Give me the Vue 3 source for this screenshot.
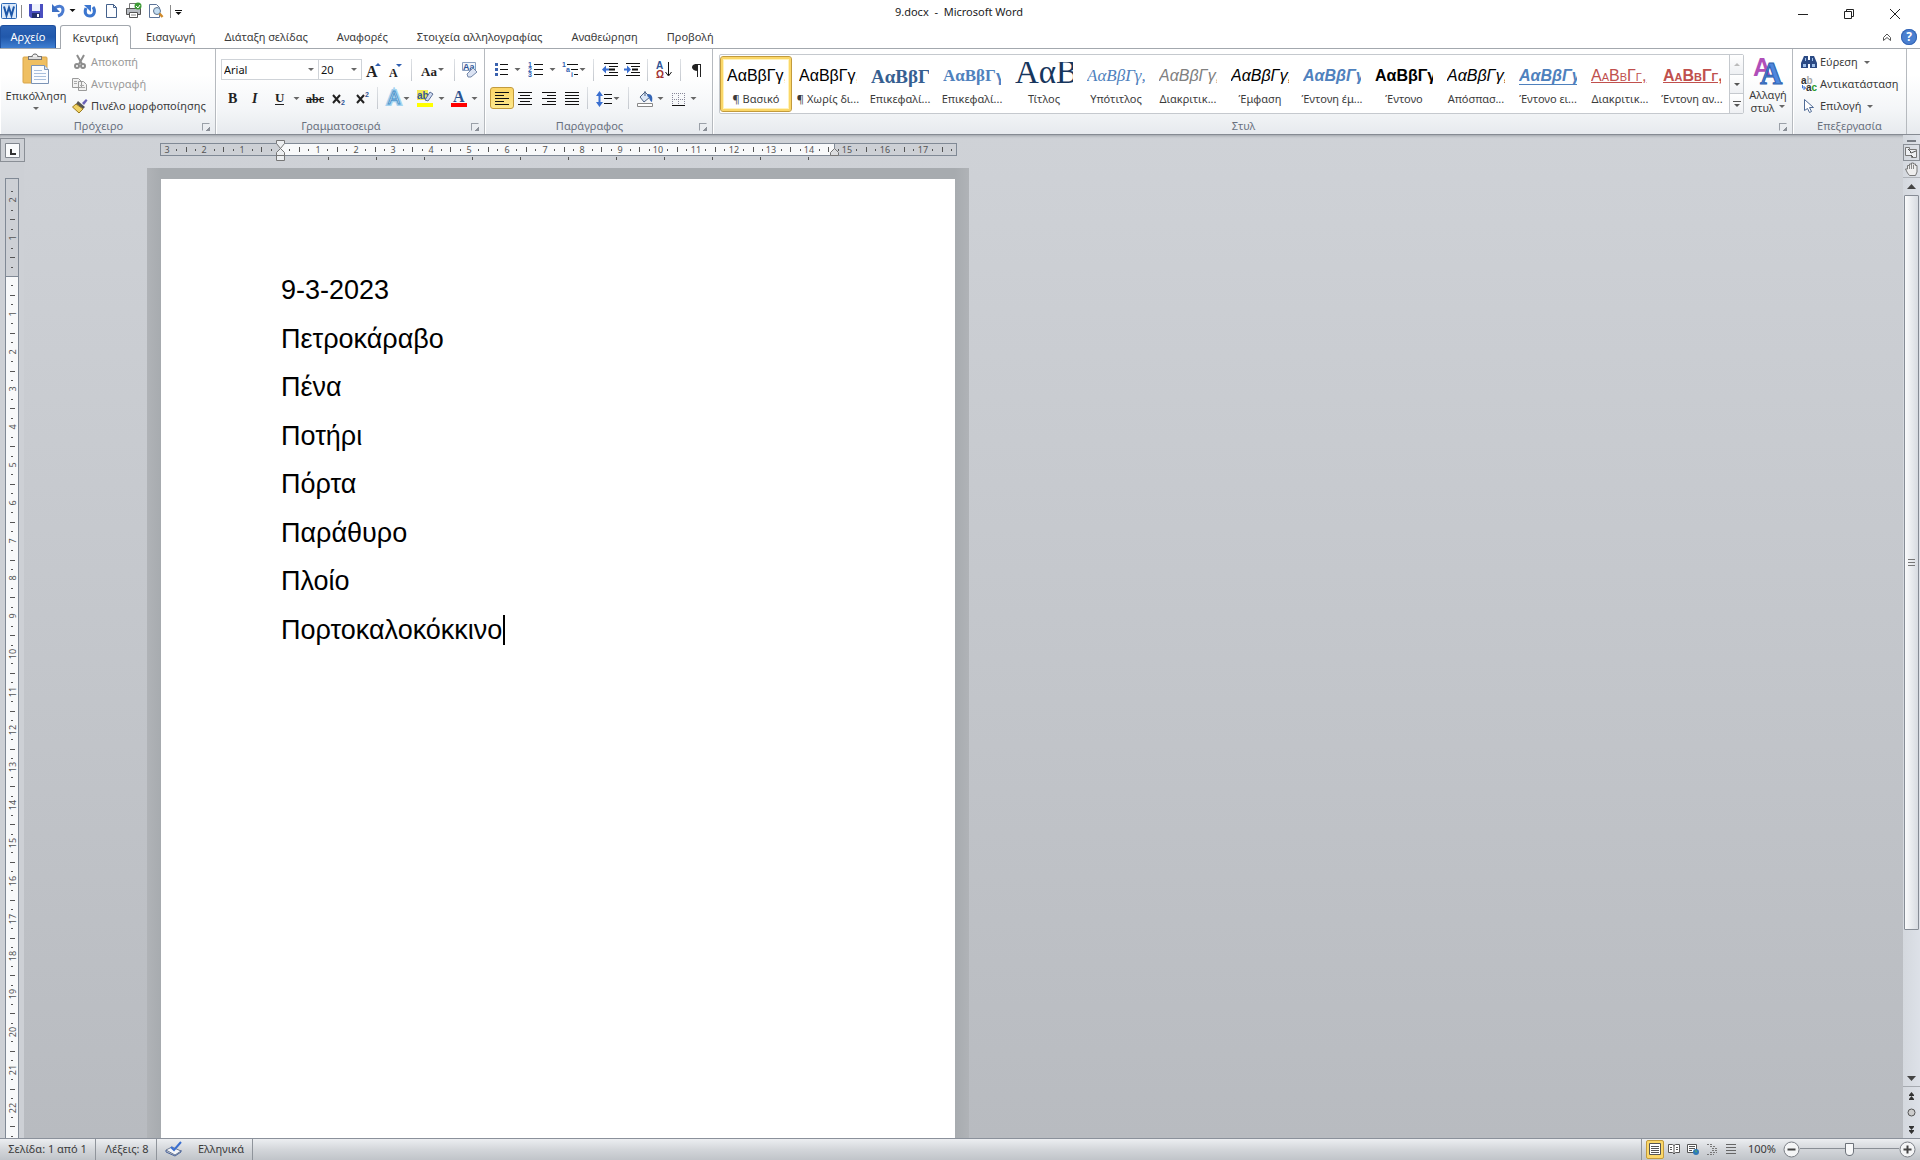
<script setup>
import { h } from 'vue'

// Icon canvas: shows the window-coordinate region x, y, w, h of the toolbar artwork
const Ico = (p, { slots }) =>
  h('svg', { viewBox: `${p.x} ${p.y} ${p.w} ${p.h}`, width: p.w, height: p.h, 'aria-hidden': 'true' }, slots.default())
Ico.props = ['x', 'y', 'w', 'h']

// Small drop-down triangle centred on x, y
const Tri = (p) => h('path', { d: `M${p.x - 3} ${p.y - 1}h6l-3 3z`, fill: p.c || '#666' })
Tri.props = ['x', 'y', 'c']

const tabs = ['Εισαγωγή', 'Διάταξη σελίδας', 'Αναφορές', 'Στοιχεία αλληλογραφίας', 'Αναθεώρηση', 'Προβολή']

const styles = [
  { name: '¶ Βασικό', cls: 'normal' },
  { name: '¶ Χωρίς δι...', cls: 'normal' },
  { name: 'Επικεφαλί...', cls: 'heading1' },
  { name: 'Επικεφαλί...', cls: 'heading2' },
  { name: 'Τίτλος', cls: 'title' },
  { name: 'Υπότιτλος', cls: 'subtitle' },
  { name: 'Διακριτικ...', cls: 'subtle' },
  { name: 'Έμφαση', cls: 'emphasis' },
  { name: 'Έντονη έμ...', cls: 'intense' },
  { name: 'Έντονο', cls: 'strong' },
  { name: 'Απόσπασ...', cls: 'emphasis' },
  { name: 'Έντονο ει...', cls: 'intense-quote' },
  { name: 'Διακριτικ...', cls: 'subtle-ref' },
  { name: 'Έντονη αν...', cls: 'intense-ref' },
]

const lines = ['9-3-2023', 'Πετροκάραβο', 'Πένα', 'Ποτήρι', 'Πόρτα', 'Παράθυρο', 'Πλοίο', 'Πορτοκαλοκόκκινο']

// Ruler marks in quarter centimetres; 37.8px to the centimetre
const marks = (from, to, origin) => {
  const out = []
  for (let q = from; q <= to; q++) {
    if (q === 0) continue
    out.push({ q, at: Math.round(origin + (q * 37.8) / 4), kind: q % 4 === 0 ? 'num' : q % 2 === 0 ? 'half' : 'dot', n: Math.abs(q / 4) })
  }
  return out
}
const hMarks = marks(-12, 71, 120)
const vMarks = marks(-9, 140, 98)
const tabStops = Array.from({ length: 11 }, (_, i) => 168 + i * 48)
</script>

<template>
  <div class="app">
    <header class="titlebar">
      <div class="qat">
        <Ico :x="0" :y="0" :w="24" :h="24">
          <rect x="1.500" y="3.500" width="15" height="15" rx="1" fill="#dbe9fa" stroke="#2d68b5" />
          <path d="M4 6.500l2.500 9 2.500-8 2.500 8 2.500-9" fill="none" stroke="#1d57a8" stroke-width="2" />
          <path d="M21.500 5v13" stroke="#8a8a8a" />
        </Ico>
        <button aria-label="Αποθήκευση"><Ico :x="24" :y="0" :w="24" :h="24">
          <path d="M29 4h14v14H31l-2-2z" fill="#4a4fc0" /><path d="M32 4h8v7h-8z" fill="#eef2fb" /><path d="M32 13h8v5h-8z" fill="#23306f" /><path d="M37 14h2v3h-2z" fill="#fff" />
        </Ico></button>
        <button aria-label="Αναίρεση"><Ico :x="48" :y="0" :w="30" :h="24">
          <path d="M55 8c4-3 8-2 8 2 0 3-2 5-5 6" fill="none" stroke="#4a7bd0" stroke-width="3" /><path d="M52 4v8h8z" fill="#3c6fc4" /><Tri :x="72.500" :y="10" c="#111" />
        </Ico></button>
        <button aria-label="Επανάληψη"><Ico :x="78" :y="0" :w="24" :h="24">
          <path d="M86 8c-2 5 0 8 4 8s6-5 3-9" fill="none" stroke="#3c76cf" stroke-width="3" /><path d="M84 5h7v7z" fill="#3c76cf" />
        </Ico></button>
        <button aria-label="Νέο"><Ico :x="102" :y="0" :w="20" :h="24">
          <path d="M106.500 4.500h7l3 3v10h-10z" fill="#fcfdff" stroke="#44618c" /><path d="M113.500 4.500v3h3" fill="none" stroke="#44618c" />
        </Ico></button>
        <button aria-label="Εκτύπωση"><Ico :x="122" :y="0" :w="23" :h="24">
          <path d="M129.500 3.500h8v6h-8z" fill="#fff" stroke="#777" /><path d="M126.500 8.500h14v6h-14z" fill="#b8bcc2" stroke="#555" /><path d="M129.500 12.500h8v5h-8z" fill="#fff" stroke="#555" /><path d="M131 15h5" stroke="#888" /><circle cx="138" cy="6" r="3.500" fill="#3d9b35" /><path d="M136 6l2 2 2-3" fill="none" stroke="#fff" />
        </Ico></button>
        <button aria-label="Προεπισκόπηση"><Ico :x="145" :y="0" :w="28" :h="24">
          <path d="M149.500 4.500h7l3 3v10h-10z" fill="#fff" stroke="#5b7398" /><circle cx="157" cy="11" r="3.500" fill="#c3ddf2" stroke="#5d738f" /><path d="M159.500 13.500l3 3.500" stroke="#d08a2a" stroke-width="2.500" /><path d="M170.500 5v13" stroke="#8a8a8a" />
        </Ico></button>
        <button aria-label="Προσαρμογή"><Ico :x="173" :y="0" :w="14" :h="24">
          <path d="M175 10.500h7" stroke="#111" /><Tri :x="178.500" :y="13" c="#111" />
        </Ico></button>
      </div>
      <h1 class="doc-title">9.docx&nbsp; -&nbsp; Microsoft Word</h1>
      <div class="win">
        <button aria-label="Ελαχιστοποίηση"><svg width="12" height="12"><path d="M1 6.500h10" stroke="#222" /></svg></button>
        <button aria-label="Επαναφορά"><svg width="12" height="12"><path d="M1.500 3.500h7v7h-7zM3.500 3.500v-2h7v7h-2" fill="none" stroke="#222" /></svg></button>
        <button aria-label="Κλείσιμο"><svg width="12" height="12"><path d="M1 1l10 10M11 1L1 11" stroke="#222" /></svg></button>
      </div>
    </header>

    <nav class="tabs">
      <button class="file-tab">Αρχείο</button>
      <button class="tab active">Κεντρική</button>
      <button v-for="t in tabs" :key="t" class="tab">{{ t }}</button>
      <div class="tab-tools">
        <button aria-label="Σύμπτυξη"><svg width="12" height="12"><path d="M2.500 6.500L6 3l3.500 3.500v3L6 6.500l-3.500 3z" fill="none" stroke="#555" /></svg></button>
        <button class="help" aria-label="Βοήθεια">?</button>
      </div>
    </nav>

    <section class="ribbon">
      <div class="group clipboard">
        <div class="body">
          <button class="big paste">
            <svg width="28" height="32">
              <rect x="1" y="4" width="24" height="26" rx="1" fill="#efbf62" stroke="#d9a548" />
              <path d="M6 3h14v4H6z" fill="#777" /><path d="M7 4h12v2H7z" fill="#ddd" /><path d="M10 4c0-4 6-4 6 0" fill="#eee" stroke="#666" />
              <path d="M9.500 12.500h13l4 4v14h-17z" fill="#fafcff" stroke="#7b93b5" /><path d="M22.500 12.500v4h4" fill="#dbe6f4" stroke="#7b93b5" />
              <path d="M12 17.500h8M12 20.500h12M12 23.500h12M12 26.500h12" stroke="#a9bfdc" />
            </svg>
            <span>Επικόλληση</span>
            <svg width="8" height="5"><path d="M1 1h6l-3 3z" fill="#666" /></svg>
          </button>
          <div class="stack">
            <button class="cmd" disabled><svg width="16" height="16"><path d="M5 1l5 9M12 1L7 10" stroke="#8d8d8d" stroke-width="2" /><circle cx="5" cy="12" r="2" fill="none" stroke="#8d8d8d" stroke-width="2" /><circle cx="11" cy="12" r="2" fill="none" stroke="#8d8d8d" stroke-width="2" /></svg>Αποκοπή</button>
            <button class="cmd" disabled><svg width="16" height="16"><path d="M.5 2.500h6l3 3v6h-9zM6.500 5.500h5l3 3v6h-8z" fill="#f2f2f2" stroke="#9a9a9a" /><path d="M2 5.500h3M2 7.500h3M8 9.500h4M8 11.500h5" stroke="#aaa" /></svg>Αντιγραφή</button>
            <button class="cmd"><svg width="16" height="16"><path d="M10 5l4-4 1.500 1.500L12 7z" fill="#6a62b8" /><path d="M6 3l7 6-2 2-7-5z" fill="#555" /><path d="M4 6l7 5-4 4-6.500-6z" fill="#f0d264" stroke="#9a7a20" /></svg>Πινέλο μορφοποίησης</button>
          </div>
        </div>
        <div class="label">Πρόχειρο<i class="launch" /></div>
      </div>

      <div class="group font">
        <div class="body rows">
          <div class="row">
            <label class="combo name"><select aria-label="Γραμματοσειρά"><option>Arial</option></select></label>
            <label class="combo size"><select aria-label="Μέγεθος"><option>20</option></select></label>
            <button aria-label="Μεγέθυνση"><Ico :x="362" :y="59" :w="24" :h="22"><text x="366" y="77" class="g" font-size="16">A</text><path d="M375 66h6l-3-3z" fill="#2f5eb0" /></Ico></button>
            <button aria-label="Σμίκρυνση"><Ico :x="386" :y="59" :w="21" :h="22"><text x="389" y="77" class="g" font-size="12">A</text><path d="M396 64h6l-3 3z" fill="#2f5eb0" /></Ico></button>
            <i class="sep" />
            <button aria-label="Πεζά-κεφαλαία"><Ico :x="416" :y="59" :w="34" :h="22"><text x="421" y="76" class="g" font-size="13">Aa</text><Tri :x="441" :y="69" /></Ico></button>
            <i class="sep" />
            <button aria-label="Απαλοιφή"><Ico :x="459" :y="59" :w="23" :h="22"><path d="M462.500 62.500h13v8h-13z" fill="#f4f7fc" stroke="#8ba0c0" /><text x="463" y="70" class="s" font-size="9" font-weight="bold">Aa</text><path d="M467 74l6-6 4 4-6 5h-3z" fill="#dbe3f3" stroke="#7387a8" /></Ico></button>
          </div>
          <div class="row">
            <button aria-label="Έντονα"><Ico :x="221" :y="87" :w="23" :h="22"><text x="228" y="103" class="g" font-size="14">B</text></Ico></button>
            <button aria-label="Πλάγια"><Ico :x="244" :y="87" :w="23" :h="22"><text x="252" y="103" class="g" font-size="14" font-style="italic">I</text></Ico></button>
            <button aria-label="Υπογράμμιση"><Ico :x="267" :y="87" :w="36" :h="22"><text x="275" y="102" class="g" font-size="13">U</text><path d="M275 104.500h9" stroke="#222" /><Tri :x="296.500" :y="98" /></Ico></button>
            <button aria-label="Διαγραφή"><Ico :x="303" :y="87" :w="24" :h="22"><text x="306" y="103" class="g" font-size="12">abc</text><path d="M306 99.500h18" stroke="#222" /></Ico></button>
            <button aria-label="Δείκτης"><Ico :x="327" :y="87" :w="23" :h="22"><path d="M333 95l7 8M340 95l-7 8" stroke="#222" stroke-width="2" /><text x="341" y="105" class="s" font-size="7" font-weight="bold">2</text></Ico></button>
            <button aria-label="Εκθέτης"><Ico :x="350" :y="87" :w="23" :h="22"><path d="M357 95l7 8M364 95l-7 8" stroke="#222" stroke-width="2" /><text x="365" y="97" class="s" font-size="7" font-weight="bold">2</text></Ico></button>
            <i class="sep" />
            <button aria-label="Εφέ κειμένου"><Ico :x="382" :y="87" :w="31" :h="22"><text x="388" y="104" font-size="18" fill="#fff" stroke="#a5d3f0" stroke-width="4" paint-order="stroke">A</text><text x="388" y="104" font-size="18" fill="#fff" stroke="#4a94cc">A</text><Tri :x="406.500" :y="98" /></Ico></button>
            <button aria-label="Επισήμανση"><Ico :x="413" :y="87" :w="34" :h="22"><path d="M417 90h11v10h-11z" fill="#f3ea55" /><text x="417" y="99" class="s" font-size="10" font-weight="bold">ab</text><path d="M425 100l5-8 3 2-5 7z" fill="#cfdaf0" stroke="#5c6f96" /><path d="M417 103h16v4h-16z" fill="#ff0" /><Tri :x="441.500" :y="98" /></Ico></button>
            <button aria-label="Χρώμα"><Ico :x="447" :y="87" :w="35" :h="22"><text x="453" y="102" class="g blue" font-size="16">A</text><path d="M451 103h16v4h-16z" fill="#f00" /><Tri :x="474.500" :y="98" /></Ico></button>
          </div>
        </div>
        <div class="label">Γραμματοσειρά<i class="launch" /></div>
      </div>

      <div class="group para">
        <div class="body rows">
          <div class="row">
            <button aria-label="Κουκκίδες"><Ico :x="490" :y="59" :w="34" :h="22"><path d="M500 64.500h8M500 69.500h8M500 74.500h8" stroke="#111" /><path d="M495 63h3v3h-3zM495 68h3v3h-3zM495 73h3v3h-3z" fill="#3a62ae" /><Tri :x="517.500" :y="69" /></Ico></button>
            <button aria-label="Αρίθμηση"><Ico :x="524" :y="59" :w="35" :h="22"><path d="M534 64.500h9M534 69.500h9M534 74.500h9" stroke="#111" /><text x="528" y="67" class="n">1</text><text x="528" y="72" class="n">2</text><text x="528" y="77" class="n">3</text><Tri :x="552.500" :y="69" /></Ico></button>
            <button aria-label="Λίστα πολλών επιπέδων"><Ico :x="559" :y="59" :w="30" :h="22"><path d="M567 64.500h11M571 69.500h7M574 74.500h4" stroke="#111" /><text x="562" y="67" class="n">1</text><text x="566" y="72" class="n">a</text><text x="571" y="77" class="n">i</text><Tri :x="582.500" :y="69" /></Ico></button>
            <i class="sep" />
            <button aria-label="Μείωση εσοχής"><Ico :x="598" :y="59" :w="23" :h="22"><path d="M604 63.500h14M609 66.500h9M609 72.500h9M604 75.500h14" stroke="#111" /><path d="M609 69.500h6" stroke="#111" stroke-width="2" /><path d="M602 69.500l4-4v3h3v2h-3v3z" fill="#3a6fd0" /></Ico></button>
            <button aria-label="Αύξηση εσοχής"><Ico :x="621" :y="59" :w="22" :h="22"><path d="M626 63.500h14M631 66.500h9M631 72.500h9M626 75.500h14" stroke="#111" /><path d="M632 69.500h6" stroke="#111" stroke-width="2" /><path d="M631 69.500l-4-4v3h-3v2h3v3z" fill="#3a6fd0" /></Ico></button>
            <i class="sep" />
            <button aria-label="Ταξινόμηση"><Ico :x="652" :y="59" :w="24" :h="22"><text x="656" y="69" class="s" font-size="10" font-weight="bold">A</text><text x="656" y="78" class="s red" font-size="10" font-weight="bold">Ω</text><path d="M668.500 62v13M665.500 72l3 4 3-4" fill="none" stroke="#111" /></Ico></button>
            <i class="sep" />
            <button aria-label="Σημάδια"><Ico :x="685" :y="59" :w="23" :h="22"><path d="M701 64.500h-6M697.500 64v13M700.500 64v13" stroke="#222" /><path d="M698 64c-8-1-8 7 0 7z" fill="#222" /></Ico></button>
          </div>
          <div class="row">
            <button class="on" aria-label="Στοίχιση αριστερά"><Ico :x="490" :y="87" :w="22" :h="20"><path d="M494 91.500h14M494 94.500h9M494 97.500h14M494 100.500h9M494 103.500h14" stroke="#111" /></Ico></button>
            <button aria-label="Στο κέντρο"><Ico :x="514" :y="87" :w="23" :h="22"><path d="M518 92.500h14M520 95.500h10M518 98.500h14M520 101.500h10M518 104.500h14" stroke="#111" /></Ico></button>
            <button aria-label="Στοίχιση δεξιά"><Ico :x="537" :y="87" :w="23" :h="22"><path d="M542 92.500h14M547 95.500h9M542 98.500h14M547 101.500h9M542 104.500h14" stroke="#111" /></Ico></button>
            <button aria-label="Πλήρης"><Ico :x="560" :y="87" :w="23" :h="22"><path d="M565 92.500h14M565 95.500h14M565 98.500h14M565 101.500h14M565 104.500h14" stroke="#111" /></Ico></button>
            <i class="sep" />
            <button aria-label="Διάστιχο"><Ico :x="592" :y="87" :w="32" :h="22"><path d="M599.500 94v10" stroke="#3a6fd0" stroke-width="2" /><path d="M596 96l3.500-5 3.500 5zM596 102l3.500 5 3.500-5z" fill="#3a6fd0" /><path d="M604 94.500h8M604 98.500h8M604 103.500h8" stroke="#111" /><Tri :x="616.500" :y="98" /></Ico></button>
            <i class="sep" />
            <button aria-label="Σκίαση"><Ico :x="633" :y="87" :w="34" :h="22"><path d="M640 97l5-5 5 5-6 5z" fill="#dce7f6" stroke="#4c6284" /><path d="M645 96v-5" stroke="#4c6284" /><path d="M648 94c4 0 5 3 4 8-3-1-2-5-5-6z" fill="#3465b5" /><path d="M637.500 103.500h15v3h-15z" fill="#fff" stroke="#888" /><Tri :x="660.500" :y="98" /></Ico></button>
            <button aria-label="Περιγράμματα"><Ico :x="667" :y="87" :w="33" :h="22"><path d="M672.500 93v12M678.500 93v12M684.500 93v12M672 93.500h13M672 99.500h13" stroke="#889" stroke-dasharray="1 1" /><path d="M672 105.500h13" stroke="#111" /><Tri :x="693.500" :y="98" /></Ico></button>
          </div>
        </div>
        <div class="label">Παράγραφος<i class="launch" /></div>
      </div>

      <div class="group style-group">
        <div class="body">
          <div class="gallery">
            <div class="items">
              <button v-for="(s, i) in styles" :key="i" class="style" :class="{ selected: i === 0 }">
                <span class="preview" :class="s.cls">ΑαΒβΓγ,</span>
                <span class="style-name">{{ s.name }}</span>
              </button>
            </div>
            <div class="gallery-nav">
              <button disabled aria-label="Πάνω"><svg width="8" height="5"><path d="M1 4h6l-3-3z" fill="#bbb" /></svg></button>
              <button aria-label="Κάτω"><svg width="8" height="5"><path d="M1 1h6l-3 3z" fill="#555" /></svg></button>
              <button aria-label="Περισσότερα"><svg width="8" height="8"><path d="M0 1.500h8" stroke="#555" /><path d="M1 4h6l-3 3z" fill="#555" /></svg></button>
            </div>
          </div>
          <button class="big change">
            <svg width="32" height="32">
              <text x="1" y="20" font-size="25" font-weight="bold" fill="#b04fb8">A</text>
              <text x="8" y="28" class="big-a" font-size="31" fill="#4f87dd" stroke="#2c5fae">A</text>
            </svg>
            <span>Αλλαγή</span>
            <span>στυλ <svg width="8" height="7"><path d="M1 1h6l-3 3z" fill="#666" /></svg></span>
          </button>
        </div>
        <div class="label">Στυλ<i class="launch" /></div>
      </div>

      <div class="group editing">
        <div class="body">
          <div class="stack">
            <button class="cmd"><svg width="16" height="16"><path d="M3 2h4v4h2V2h4l3 7v5H9v-4H7v4H0V9z" fill="#2b4a84" /><path d="M2 10h3v3H2zM11 10h3v3h-3zM4 4h1v3H4zM11 4h1v3h-1z" fill="#9fc0ea" /></svg>Εύρεση<svg class="dd" width="8" height="5"><path d="M1 1h6l-3 3z" fill="#666" /></svg></button>
            <button class="cmd"><svg width="16" height="16"><text x="0" y="8" font-size="10" font-weight="bold"><tspan fill="#333">a</tspan><tspan fill="#aaa">b</tspan></text><text x="5" y="15" font-size="10" font-weight="bold"><tspan fill="#333">a</tspan><tspan fill="#2a9a2a">c</tspan></text><path d="M1.500 9v3h3M2.500 10l2 2-2 2" fill="none" stroke="#3a6fd0" /></svg>Αντικατάσταση</button>
            <button class="cmd"><svg width="16" height="16"><path d="M3.500 1.500v11l3-2 2 4 2-1-2-4h4z" fill="#fff" stroke="#4f6b96" /></svg>Επιλογή<svg class="dd" width="8" height="5"><path d="M1 1h6l-3 3z" fill="#666" /></svg></button>
          </div>
        </div>
        <div class="label">Επεξεργασία</div>
      </div>
      <div class="tail" />
    </section>

    <main class="workspace">
      <div class="left">
        <button class="corner" aria-label="Στηλοθέτης"><svg width="15" height="15"><path d="M.5.5h14v14H.5z" fill="#fafbfc" stroke="#80858d" /><path d="M5 6h2v4h4v2H5z" fill="#333" /></svg></button>
        <div class="vruler">
          <svg width="14" height="1400">
            <rect x=".5" y=".5" width="13" height="98" fill="#cdd0d5" stroke="#808995" />
            <rect x=".5" y="98.500" width="13" height="1310" fill="#f8f9fa" stroke="#808995" />
            <g v-for="m in vMarks" :key="m.q">
              <text v-if="m.kind === 'num'" class="rule" :transform="`translate(11 ${m.at}) rotate(-90)`">{{ m.n }}</text>
              <rect v-else :x="m.kind === 'half' ? 5 : 6" :y="m.at" :width="m.kind === 'half' ? 5 : 2" height="1" fill="#555" />
            </g>
          </svg>
        </div>
      </div>

      <div class="canvas">
        <svg class="hruler" width="797" height="24">
          <rect x=".5" y="5.500" width="796" height="12" fill="#cdd0d5" stroke="#808995" />
          <rect x="120.500" y="5.500" width="554" height="12" fill="#f8f9fa" stroke="#808995" />
          <g v-for="m in hMarks" :key="m.q">
            <text v-if="m.kind === 'num'" class="rule" :x="m.at" y="15">{{ m.n }}</text>
            <rect v-else :x="m.at" :y="m.kind === 'half' ? 9 : 11" width="1" :height="m.kind === 'half' ? 5 : 2" fill="#555" />
          </g>
          <rect v-for="t in tabStops" :key="t" :x="t" y="19" width="1" height="3" fill="#555" />
          <path d="M116.500 2.500h8v3l-4 5-4-5zM116.500 17.500v-3l4-4 4 4v3zM116.500 17.500h8v5h-8z" fill="#eceef0" stroke="#777" />
          <path d="M670.500 17.500v-3l4-4 4 4v3z" fill="#dcdddf" stroke="#777" />
        </svg>
        <div class="shade">
          <article class="page">
            <div class="text">
              <p v-for="(l, i) in lines" :key="l">{{ l }}<i v-if="i === lines.length - 1" class="caret" /></p>
            </div>
          </article>
        </div>
      </div>

      <aside class="scroll">
        <i class="split" />
        <button class="pick" aria-label="Επιλογή"><svg width="15" height="15"><path d="M1.500 2.500h4v2h7v8h-5v-2h-6z" fill="#eef0f3" stroke="#777" /><path d="M4 4l3 3M6 7l1 1 5-2M7 10l2 2" fill="none" stroke="#555" /></svg></button>
        <button class="hand" aria-label="Μετακίνηση"><svg width="15" height="15"><path d="M3.500 11l-2-4h2V3.500h2V2h2V1h2v1h2v1.500h1.500V10l-1.500 3.500h-6z" fill="#eee" stroke="#777" /><path d="M5.500 3v4M7.500 2v5M9.500 3v4" stroke="#888" /></svg></button>
        <button class="up" aria-label="Κύλιση επάνω"><svg width="9" height="5"><path d="M0 5l4.500-5L9 5z" fill="#444" /></svg></button>
        <div class="track"><div class="thumb"><i /><i /><i /></div></div>
        <button class="down" aria-label="Κύλιση κάτω"><svg width="9" height="5"><path d="M0 0l4.500 5L9 0z" fill="#444" /></svg></button>
        <button class="browse" aria-label="Προηγούμενη σελίδα"><svg width="7" height="8"><path d="M1 3l2.500-3L6 3zM1 7l2.500-3L6 7z" fill="#333" /><path d="M1 7.500h5M1 3.500h5" stroke="#333" /></svg></button>
        <button class="browse" aria-label="Αντικείμενο"><svg width="9" height="9"><circle cx="4.500" cy="4.500" r="3.500" fill="#ccc" stroke="#555" /></svg></button>
        <button class="browse" aria-label="Επόμενη σελίδα"><svg width="7" height="8"><path d="M1 1l2.500 3L6 1zM1 5l2.500 3L6 5z" fill="#333" /><path d="M1 .5h5M1 4.500h5" stroke="#333" /></svg></button>
      </aside>
    </main>

    <footer class="status">
      <button class="st page-no">Σελίδα: 1 από 1</button>
      <button class="st words">Λέξεις: 8</button>
      <button class="st lang"><svg width="18" height="16"><path d="M1 9l6-3 9 4-6 4z" fill="#f4f6fa" stroke="#6c7a94" /><path d="M1 9v2l9 4 6-4v-2" fill="none" stroke="#48639c" /><path d="M6 6l3 3 7-8" fill="none" stroke="#3a6fd0" stroke-width="2" /></svg>Ελληνικά</button>
      <div class="st-right">
        <button class="view on" aria-label="Διάταξη εκτύπωσης"><svg width="12" height="12"><path d="M.5.5h11v11H.5z" fill="#fff" stroke="#555" /><path d="M2 3.500h8M2 5.500h8M2 7.500h8M2 9.500h8" stroke="#555" /></svg></button>
        <button class="view" aria-label="Ανάγνωση"><svg width="12" height="12"><path d="M.5 1.500h4l1.500 1 1.500-1h4v8h-4L6 11 4.500 9.500h-4zM6 2v9" fill="#fff" stroke="#555" /><path d="M2 4.500h2M2 6.500h2M8 4.500h2M8 6.500h2" stroke="#555" /></svg></button>
        <button class="view" aria-label="Web"><svg width="12" height="12"><path d="M.5 1.500h9v8h-9z" fill="#fff" stroke="#555" /><path d="M2 3.500h6M2 5.500h6M2 7.500h3" stroke="#555" /><circle cx="9" cy="9" r="3" fill="#2f78b8" /><path d="M8 7l2 1-1 2z" fill="#53b35c" /></svg></button>
        <button class="view" aria-label="Διάρθρωση"><svg width="12" height="12"><path d="M1 1.500h6M4 3.500h6M6 5.500h5M6 7.500h5M4 9.500h7M1 11.500h7" stroke="#777" stroke-dasharray="2 1" /></svg></button>
        <button class="view" aria-label="Πρόχειρο"><svg width="12" height="12"><path d="M1 1.500h10M1 4.500h10M1 7.500h10M1 10.500h10" stroke="#666" /></svg></button>
        <button class="zoom-val">100%</button>
        <button class="round" aria-label="Σμίκρυνση"><svg width="17" height="17"><circle cx="8.500" cy="8.500" r="7.500" fill="#f4f5f6" stroke="#7b7f86" /><path d="M4.500 8.500h8" stroke="#444" stroke-width="2" /></svg></button>
        <input class="slider" type="range" min="0" max="200" value="100" aria-label="Ζουμ" />
        <button class="round" aria-label="Μεγέθυνση"><svg width="17" height="17"><circle cx="8.500" cy="8.500" r="7.500" fill="#f4f5f6" stroke="#7b7f86" /><path d="M4.500 8.500h8M8.500 4.500v8" stroke="#444" stroke-width="2" /></svg></button>
      </div>
    </footer>
  </div>
</template>

<style>
html, body { background: #fff; overflow: hidden; }
</style>

<style scoped>
.app { display: flex; flex-direction: column; height: 100vh; font-family: "Noto Sans", sans-serif; font-size: 11px; line-height: 16px; color: #3b3b3b; background: #fff; }
.app * { box-sizing: border-box; }
button { display: flex; align-items: center; justify-content: center; margin: 0; padding: 0; border: 0; background: none; font: inherit; color: inherit; white-space: nowrap; }
svg { display: block; flex: none; }
text { font-family: "Liberation Sans", sans-serif; }
text.g { font-family: "Liberation Serif", serif; font-weight: bold; fill: #222; }
text.blue { fill: #2c5490; }
text.big-a { font-family: "Liberation Serif", serif; font-weight: bold; }
text.s { fill: #2f5597; }
text.red { fill: #a03030; }
text.n { font-size: 7px; font-weight: bold; fill: #2f5eb0; }
text.rule { font-family: "Noto Sans", sans-serif; font-size: 9px; text-anchor: middle; fill: #555; }

.titlebar { display: grid; grid-template-columns: 1fr auto 1fr; height: 25px; align-items: start; }
.qat { display: flex; }
.doc-title { margin: 0; padding: 4px 2px 0 0; font-size: 11px; font-weight: 400; line-height: 16px; color: #222; }
.win { display: flex; justify-content: flex-end; gap: 34px; padding: 8px 19px 0 0; }

.tabs { display: flex; gap: 1px; height: 24px; border-bottom: 1px solid #a3a8ae; }
.tab { height: 23px; padding: 0 14px; }
.tab.active { height: 24px; width: 71px; margin-left: 3px; padding: 0; border: 1px solid #a3a8ae; border-bottom: 0; border-radius: 3px 3px 0 0; background: #fff; }
.file-tab { width: 56px; height: 23px; border: 1px solid #1d4f9e; border-bottom: 0; border-radius: 3px 3px 0 0; background: linear-gradient(#2b62b4, #2158ab 50%, #3f7fd2); color: #fff; }
.tab-tools { display: flex; align-items: center; gap: 8px; margin-left: auto; padding-right: 3px; }
.help { width: 16px; height: 16px; border-radius: 50%; background: #4a7fd0; box-shadow: inset 0 0 0 1px #3565b4; color: #fff; font-weight: 700; font-size: 12px; }

.ribbon { display: flex; height: 86px; border-bottom: 1px solid #868b93; background: linear-gradient(#fff 30%, #f4f6f8 70%, #e7eaee); }
.group { display: flex; flex-direction: column; flex: none; border-right: 1px solid #b6babf; box-shadow: inset 1px 0 #fff; }
.body { display: flex; height: 68px; }
.label { position: relative; height: 17px; line-height: 17px; text-align: center; color: #69717f; padding-right: 18px; }
.editing .label { padding-right: 0; }
.launch { position: absolute; right: 5px; top: 6px; width: 8px; height: 8px; border: 1px solid #9aa0a8; border-right-color: transparent; border-bottom-color: transparent; background: linear-gradient(135deg, transparent 55%, #8b9098 55%) 2px 2px / 5px 5px no-repeat; }
.clipboard { width: 216px; }
.font { width: 269px; }
.para { width: 228px; }
.style-group { flex: 1; min-width: 0; }
.editing { width: 114px; }
.tail { width: 13px; }

.big { flex-direction: column; justify-content: flex-start; }
.big span { line-height: 13px; }
.paste { width: 72px; padding: 4px 0 0; gap: 4px; }
.stack { display: flex; flex-direction: column; padding-top: 2px; align-items: flex-start; }
.cmd { height: 22px; gap: 3px; }
.cmd:disabled { color: #9a9a9a; }
.dd { margin-left: 2px; }
.editing .stack { padding-left: 8px; }

.rows { flex-direction: column; gap: 6px; padding: 10px 0 0 5px; }
.row { display: flex; height: 22px; }
.sep { flex: none; width: 9px; height: 22px; background: linear-gradient(#dfe2e6, #c4c8ce) 4px 0 / 1px 100% no-repeat; }
.combo { position: relative; height: 21px; border: 1px solid #cfd3d8; background: #fff; }
.combo.name { width: 98px; }
.combo.size { width: 43px; border-left: 0; }
.combo::after { content: ""; position: absolute; right: 4px; top: 8px; border: 3px solid transparent; border-top-color: #666; border-bottom: 0; }
.combo select { appearance: none; width: 100%; height: 19px; border: 0; padding: 0 0 0 2px; background: none; font: inherit; color: #111; }
.row .on { width: 24px; height: 22px; border: 1px solid #c29b3d; border-radius: 3px; background: linear-gradient(#fbd566, #fde88c); }

.gallery { display: flex; flex: 1; min-width: 0; height: 60px; margin: 5px 0 0 6px; border: 1px solid #c5c9ce; border-radius: 2px; background: #fff; }
.items { display: flex; flex: 1; min-width: 0; overflow: hidden; padding-top: 1px; }
.style { flex: none; flex-direction: column; justify-content: flex-start; width: 72px; height: 56px; padding: 6px 0 0; border-radius: 3px; }
.style.selected { padding-top: 5px; border: 1px solid #c29b3d; box-shadow: inset 0 0 0 2px #fbd768, inset 0 0 0 3px #fff3bd; }
.preview { width: 58px; height: 26px; overflow: hidden; text-align: left; font: 16px/28px "Liberation Sans", sans-serif; color: #000; }
.style-name { margin-top: 3px; line-height: 16px; }
.heading1 { font: bold 19px/30px "Liberation Serif", serif; color: #365f91; }
.heading2 { font: bold 17px/28px "Liberation Serif", serif; color: #4f81bd; }
.title { font: 33px/20px "Liberation Serif", serif; color: #17365d; }
.subtitle { font: italic 17px/28px "Liberation Serif", serif; color: #4f81bd; }
.subtle { font-style: italic; color: #808080; }
.emphasis { font-style: italic; }
.intense { font-style: italic; font-weight: 700; color: #4f81bd; }
.strong { font-weight: 700; }
.intense-quote { font-style: italic; font-weight: 700; color: #4f81bd; text-decoration: underline; text-underline-offset: 3px; }
.subtle-ref { font-variant: small-caps; color: #c0504d; text-decoration: underline; }
.intense-ref { font-variant: small-caps; font-weight: 700; color: #c0504d; text-decoration: underline; }
.gallery-nav { display: flex; flex-direction: column; width: 14px; border-left: 1px solid #c5c9ce; }
.gallery-nav button { flex: 1; background: linear-gradient(#fff, #eef0f3); }
.gallery-nav button + button { border-top: 1px solid #c5c9ce; }
.change { width: 48px; padding: 7px 0 0; }
.change span { display: flex; align-items: center; gap: 3px; }

.workspace { display: grid; grid-template-columns: 24px 1fr 17px; flex: 1; min-height: 0; background: linear-gradient(#cfd2d7, #b8bbc0); box-shadow: inset 0 2px 3px -1px #9da1a7; }
.left { display: flex; flex-direction: column; gap: 16px; min-height: 0; padding-top: 3px; background: linear-gradient(transparent 4px, #cdd0d5 4px); }
.corner { flex: none; width: 25px; height: 24px; border: 1px solid #8a8f96; background: #cdd0d5; }
.vruler { flex: 1; min-height: 0; overflow: hidden; padding-left: 5px; }
.canvas { display: flex; flex-direction: column; min-width: 0; min-height: 0; padding-top: 3px; overflow: hidden; }
.hruler { margin-left: 136px; }
.shade { display: flex; flex: 1; min-height: 0; width: 822px; margin: 6px 0 0 123px; padding: 11px 14px 0; background: linear-gradient(90deg, #b0b3b7, #a7abaf 14px, #a7abaf 808px, #b0b3b7); }
.page { flex: 1; background: #fff; padding: 95px 120px 0; overflow: hidden; }
.text { display: flex; flex-direction: column; justify-content: space-between; height: 372px; }
.text p { display: flex; align-items: center; margin: 0; font: 27px/32px "Liberation Sans", Arial, sans-serif; color: #000; }
.caret { width: 2px; height: 30px; margin-left: 1px; background: #000; }

.scroll { display: flex; flex-direction: column; align-items: stretch; min-height: 0; padding-top: 5px; background: linear-gradient(90deg, #d4d8de, #dde1e8); }
.split { height: 2px; margin: 0 4px; background: #777c84; }
.pick { flex: none; height: 17px; margin-top: 2px; border: 1px solid #8a8f96; }
.hand { flex: none; height: 17px; border-bottom: 1px solid #b0b4ba; }
.up { flex: none; height: 17px; }
.track { flex: 1; min-height: 0; }
.thumb { display: flex; flex-direction: column; align-items: center; justify-content: center; gap: 2px; width: 15px; height: 84%; margin-left: 1px; border: 1px solid #868c95; border-radius: 1px; background: linear-gradient(90deg, #fafbfc, #d7dbe1); }
.thumb i { width: 7px; height: 1px; background: #777; }
.down { flex: none; height: 17px; border-bottom: 1px solid #a6aab0; }
.browse { flex: none; height: 17px; }

.status { display: flex; align-items: stretch; height: 22px; border-top: 1px solid #8b919b; background: linear-gradient(#eceef1, #d3d6da 50%, #c0c4c9); }
.st { padding-bottom: 1px; border-right: 1px solid #8f949b; }
.page-no { width: 96px; }
.words { width: 61px; padding-left: 2px; }
.lang { width: 96px; gap: 15px; }
.st-right { display: flex; align-items: center; margin-left: auto; padding: 0 4px 1px; border-left: 1px solid #8f949b; }
.view { width: 18px; height: 19px; margin-right: 1px; }
.view.on { border: 1px solid #c29b3d; border-radius: 2px; background: #fbd768; }
.zoom-val { width: 42px; }
.round { width: 17px; height: 17px; }
.slider { appearance: none; width: 99px; height: 16px; margin: 0; background: linear-gradient(#8a8f96, #8a8f96) 0 7px / 100% 1px no-repeat; }
.slider::-webkit-slider-thumb { appearance: none; width: 9px; height: 13px; border: 1px solid #6d727a; border-radius: 1px 1px 5px 5px; background: #f7f8f9; }
</style>
